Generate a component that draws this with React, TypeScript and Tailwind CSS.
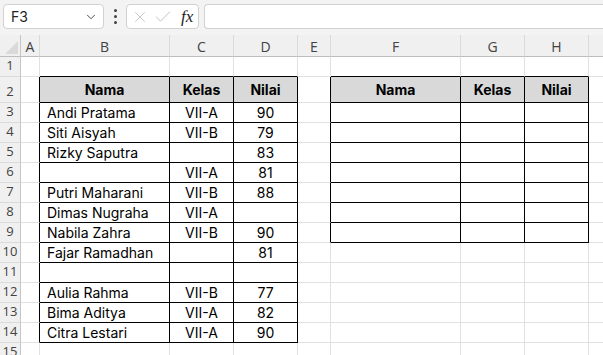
import { ChevronDown, X, Check } from 'lucide-react';

const COLS = ['A', 'B', 'C', 'D', 'E', 'F', 'G', 'H', 'I'];

const LEFT: Record<number, [string, string, string]> = {
  2: ['Nama', 'Kelas', 'Nilai'],
  3: ['Andi Pratama', 'VII-A', '90'],
  4: ['Siti Aisyah', 'VII-B', '79'],
  5: ['Rizky Saputra', '', '83'],
  6: ['', 'VII-A', '81'],
  7: ['Putri Maharani', 'VII-B', '88'],
  8: ['Dimas Nugraha', 'VII-A', ''],
  9: ['Nabila Zahra', 'VII-B', '90'],
  10: ['Fajar Ramadhan', '', '81'],
  11: ['', '', ''],
  12: ['Aulia Rahma', 'VII-B', '77'],
  13: ['Bima Aditya', 'VII-A', '82'],
  14: ['Citra Lestari', 'VII-A', '90'],
};

const RIGHT_HEAD: Record<string, string> = { F: 'Nama', G: 'Kelas', H: 'Nilai' };

const ROWS = Array.from({ length: 15 }, (_, i) => i + 1);

function cellText(row: number, col: string) {
  const l = LEFT[row];
  if (l) {
    if (col === 'B') return l[0];
    if (col === 'C') return l[1];
    if (col === 'D') return l[2];
  }
  if (row === 2 && RIGHT_HEAD[col]) return RIGHT_HEAD[col];
  return '';
}

function Cell({ row, col }: { row: number; col: string }) {
  const inLeft = ['B', 'C', 'D'].includes(col);
  const inRight = ['F', 'G', 'H'].includes(col);
  const rightBlack =
    (['A', 'B', 'C', 'D'].includes(col) && row >= 2 && row <= 14) ||
    (['E', 'F', 'G', 'H'].includes(col) && row >= 2 && row <= 9);
  const bottomBlack = (inLeft && row >= 1 && row <= 14) || (inRight && row >= 1 && row <= 9);
  const header = row === 2 && (inLeft || inRight);
  const fill = header ? 'bg-[#d9d9d9]' : 'bg-white';
  const h = row === 2 ? 'h-[26px]' : 'h-[20px]';
  const text = cellText(row, col);
  const align = col === 'B' && !header ? 'justify-start pl-[7px]' : 'justify-center';
  return (
    <div
      className={`${h} ${fill} border-r border-b ${rightBlack ? 'border-r-black' : 'border-r-[#e1e1e1]'} ${
        bottomBlack ? 'border-b-black' : 'border-b-[#e1e1e1]'
      } flex items-center ${align} overflow-hidden whitespace-nowrap text-[14px] text-black ${
        header ? 'font-bold' : ''
      }`}
    >
      {text}
    </div>
  );
}

export default function App() {
  return (
    <div className="w-[603px] h-[355px] overflow-hidden bg-white font-['Inter','Noto_Sans',sans-serif]">
      {/* formula bar */}
      <div className="h-[35px] bg-[#f3f3f3] flex items-start pt-[4px] pl-[3px]">
        <div className="w-[101px] h-[25px] bg-white border border-[#d1d1d1] rounded-[4px] flex items-center justify-between pl-[7px] pr-[5px]">
          <span className="text-[14px] text-[#242424]">F3</span>
          <ChevronDown size={14} strokeWidth={1.6} className="text-[#424242]" />
        </div>
        <div className="w-[22px] h-[25px] flex items-center justify-center">
          <div className="flex flex-col gap-[3px]">
            <span className="w-[3px] h-[3px] bg-[#424242] rounded-full" />
            <span className="w-[3px] h-[3px] bg-[#424242] rounded-full" />
            <span className="w-[3px] h-[3px] bg-[#424242] rounded-full" />
          </div>
        </div>
        <div className="w-[73px] h-[25px] bg-white border border-[#d1d1d1] rounded-[4px] flex items-center pl-[4px] pr-[4px]">
          <X size={18} strokeWidth={1.1} className="text-[#bdbdbd]" />
          <Check size={20} strokeWidth={1.1} className="text-[#bdbdbd] ml-[4px]" />
          <span className="ml-[8px] text-[17px] italic text-[#242424] font-['Liberation_Serif',serif] leading-none">
            fx
          </span>
        </div>
        <div className="ml-[5px] flex-1 h-[25px] bg-white border border-[#d1d1d1] rounded-l-[4px] border-r-0" />
      </div>

      {/* grid */}
      <div className="grid grid-cols-[21px_19px_130px_64px_64px_33px_130px_64px_64px_64px]">
        <div className="h-[22px] bg-[#f0f0f0] border-r border-b border-r-[#c6c6c6] border-b-[#bdbdbd] relative">
          <div className="absolute right-[2px] bottom-[2px] w-0 h-0 border-l-[13px] border-l-transparent border-b-[13px] border-b-[#dadada]" />
        </div>
        {COLS.map((c) => (
          <div
            key={c}
            className="h-[22px] bg-[#f0f0f0] border-r border-b border-r-[#dadada] border-b-[#bdbdbd] flex items-center justify-center pt-[2px] text-[14px] text-[#424242] font-['Open_Sans',sans-serif]"
          >
            {c === 'I' ? '' : c}
          </div>
        ))}
        {ROWS.map((r) => (
          <>
            <div
              key={`h${r}`}
              className={`${r === 2 ? 'h-[26px]' : 'h-[20px]'} bg-[#f0f0f0] border-r border-b border-r-[#c6c6c6] border-b-[#dadada] flex items-end justify-center pb-[1px] text-[13px] text-[#424242] font-['Open_Sans',sans-serif]`}
            >
              {r}
            </div>
            {COLS.map((c) => (
              <Cell key={`${c}${r}`} row={r} col={c} />
            ))}
          </>
        ))}
      </div>
    </div>
  );
}
